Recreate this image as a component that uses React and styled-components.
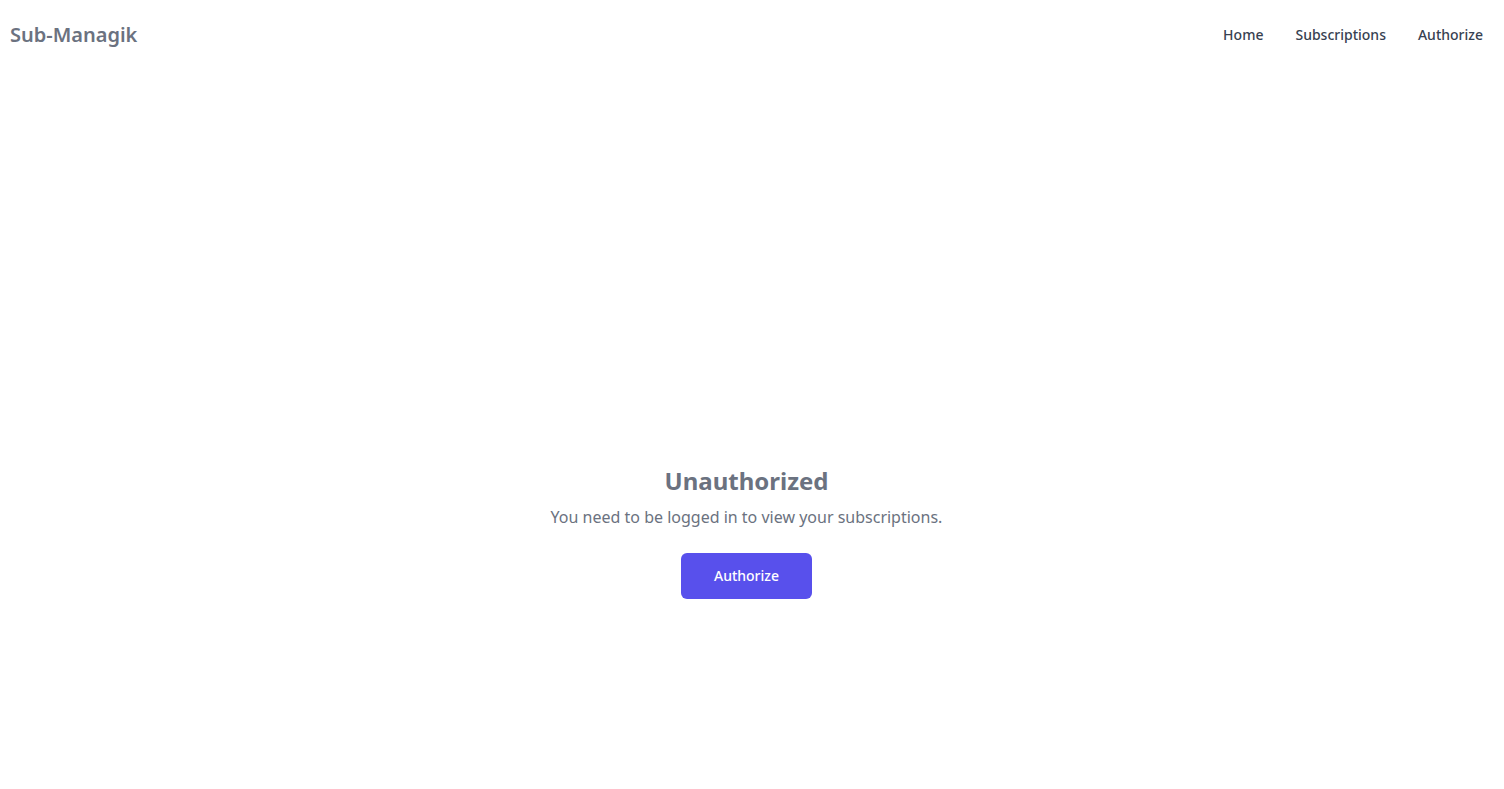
import styled, { createGlobalStyle } from "styled-components";

const GlobalStyle = createGlobalStyle`
  html, body {
    margin: 0;
    padding: 0;
    background: #ffffff;
    font-family: "Noto Sans", "Open Sans", sans-serif;
  }
  * {
    box-sizing: border-box;
  }
`;

const Page = styled.div`
  min-height: 100vh;
  display: flex;
  flex-direction: column;
`;

const Header = styled.header`
  height: 70px;
  display: flex;
  align-items: center;
  justify-content: space-between;
  padding: 0 5px 0 10px;
`;

const Logo = styled.a`
  font-size: 20px;
  font-weight: 600;
  color: #6b7280;
  text-decoration: none;
  line-height: 28px;
`;

const Nav = styled.nav`
  display: flex;
  align-items: center;
`;

const NavLink = styled.a`
  padding: 0 16px;
  font-size: 14px;
  font-weight: 500;
  line-height: 20px;
  color: #374151;
  text-decoration: none;
  cursor: pointer;
`;

const Main = styled.main`
  display: flex;
  flex-direction: column;
  align-items: center;
  padding: 395px 11px 0 0;
`;

const Title = styled.h1`
  margin: 0;
  font-size: 24px;
  line-height: 32px;
  font-weight: 700;
  color: #6b7280;
`;

const Message = styled.p`
  margin: 8px 0 0;
  font-size: 16px;
  line-height: 24px;
  color: #6b7280;
`;

const Button = styled.button`
  margin-top: 24px;
  height: 46px;
  padding: 0 32.5px;
  border: none;
  border-radius: 6px;
  background: #5850ec;
  color: #ffffff;
  font-family: inherit;
  font-size: 14px;
  font-weight: 500;
  line-height: 20px;
  cursor: pointer;
`;

export default function App() {
  return (
    <Page>
      <GlobalStyle />
      <Header>
        <Logo href="#">Sub-Managik</Logo>
        <Nav>
          <NavLink>Home</NavLink>
          <NavLink>Subscriptions</NavLink>
          <NavLink>Authorize</NavLink>
        </Nav>
      </Header>
      <Main>
        <Title>Unauthorized</Title>
        <Message>You need to be logged in to view your subscriptions.</Message>
        <Button>Authorize</Button>
      </Main>
    </Page>
  );
}
